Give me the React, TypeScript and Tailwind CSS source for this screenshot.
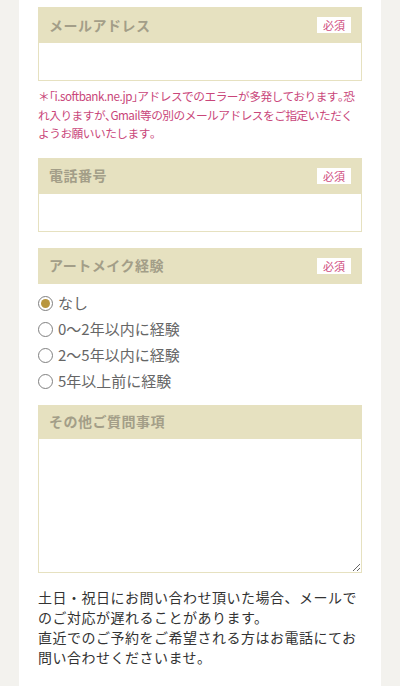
import React, { useState } from 'react';

const FONT = { fontFamily: '"Noto Sans CJK JP", "Noto Sans", sans-serif' };

const Required: React.FC = () => (
    <span className="bg-white text-[#cf4b7d] text-[11px] leading-[16px] h-[16px] px-[6px]">必須</span>
);

const FieldHeader: React.FC<{ title: string; required?: boolean }> = ({ title, required }) => (
    <div className="h-[36px] bg-[#e6e1c0] flex items-center justify-between pl-[11px] pr-[11px]">
        <span className="text-[14px] font-bold text-[#a39e88] tracking-[0.5px]">{title}</span>
        {required && <Required />}
    </div>
);

const OPTIONS = ['なし', '0〜2年以内に経験', '2〜5年以内に経験', '5年以上前に経験'];

export default function App() {
    const [exp, setExp] = useState('なし');

    return (
        <div className="min-h-[686px] bg-[#f3f2ee] px-[19px]" style={FONT}>
            <div className="bg-white min-h-[686px] px-[19px] pt-[7px] pb-[20px]">
                {/* メールアドレス */}
                <FieldHeader title="メールアドレス" required />
                <input type="email" className="block w-full h-[38px] border border-t-0 border-[#e6e1c0] outline-none px-2" />
                <p className="mt-[6px] text-[11.7px] leading-[18.5px] tracking-[-0.5px] text-[#c9467a]">
                    ＊｢i.softbank.ne.jp｣アドレスでのエラーが多発しております｡恐れ入りますが､Gmail等の別のメールアドレスをご指定いただくようお願いいたします｡
                </p>

                {/* 電話番号 */}
                <div className="mt-[15px]">
                    <FieldHeader title="電話番号" required />
                    <input type="tel" className="block w-full h-[38px] border border-t-0 border-[#e6e1c0] outline-none px-2" />
                </div>

                {/* アートメイク経験 */}
                <div className="mt-[16px]">
                    <FieldHeader title="アートメイク経験" required />
                    <div className="mt-[7px] flex flex-col">
                        {OPTIONS.map(o => (
                            <label key={o} className="h-[26px] flex items-center gap-[5px] text-[15px] text-[#666] cursor-pointer">
                                <input
                                    type="radio"
                                    name="exp"
                                    checked={exp === o}
                                    onChange={() => setExp(o)}
                                    className="sr-only"
                                />
                                <span className="w-[15px] h-[15px] rounded-full border border-[#808080] bg-white flex items-center justify-center">
                                    {exp === o && <span className="w-[9px] h-[9px] rounded-full bg-[#b8963f]" />}
                                </span>
                                <span>{o}</span>
                            </label>
                        ))}
                    </div>
                </div>

                {/* その他ご質問事項 */}
                <div className="mt-[10px]">
                    <div className="h-[34px] bg-[#e6e1c0] flex items-center pl-[11px]">
                        <span className="text-[14px] font-bold text-[#a39e88] tracking-[0.5px]">その他ご質問事項</span>
                    </div>
                    <textarea className="block w-full h-[134px] border border-t-0 border-[#e6e1c0] outline-none p-2" />
                </div>

                <p className="mt-[14px] text-[14px] leading-[20px] tracking-[0.5px] text-[#333]">
                    土日・祝日にお問い合わせ頂いた場合、メールでのご対応が遅れることがあります。
                    <br />
                    直近でのご予約をご希望される方はお電話にてお問い合わせくださいませ。
                </p>
            </div>
        </div>
    );
}
